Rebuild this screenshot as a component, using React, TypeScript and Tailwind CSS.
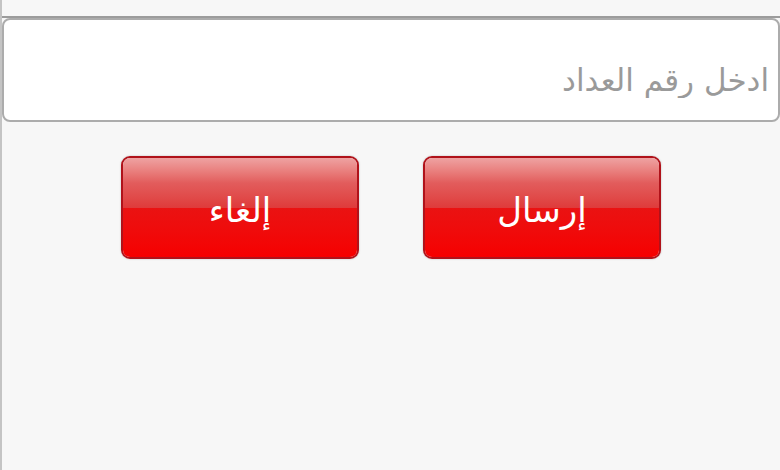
import { useState } from "react";

const AR_FONT = { fontFamily: '"DejaVu Sans", "Noto Sans", sans-serif' };

function RedButton({ label, onClick }: { label: string; onClick?: () => void }) {
  return (
    <button
      onClick={onClick}
      className="relative w-[238px] h-[103px] rounded-[9px] border-[2px] border-[#b0121a] overflow-hidden shadow-[0_0_2px_rgba(0,0,0,0.25)]"
    >
      {/* glossy top half / solid bottom half */}
      <div className="absolute inset-0 flex flex-col">
        <div className="h-1/2 bg-gradient-to-b from-[#eea2a2] via-[#e25c5c] to-[#df3a3a]" />
        <div className="h-1/2 bg-gradient-to-b from-[#ea1212] to-[#f60000]" />
      </div>
      <span className="relative text-white text-[34px] leading-none pt-[4px] block" style={AR_FONT}>
        {label}
      </span>
    </button>
  );
}

export default function App() {
  const [meter, setMeter] = useState("");

  return (
    <div className="w-[780px] h-[470px] bg-[#f7f7f7] border-l-2 border-[#c4c4c4] overflow-hidden" dir="rtl">
      <div className="h-[18px] border-b-2 border-[#9c9c9c]" />

      <div className="h-[104px] bg-white rounded-[8px] border-2 border-[#acacac] flex items-end">
        <input
          value={meter}
          onChange={e => setMeter(e.target.value)}
          placeholder="ادخل رقم العداد"
          className="w-full bg-transparent outline-none text-[31px] text-[#444] placeholder:text-[#9a9a9a] pr-[9px] pb-[17px]"
          style={AR_FONT}
        />
      </div>

      <div className="flex justify-center gap-[64px] mt-[34px]">
        <RedButton label="إرسال" />
        <RedButton label="إلغاء" onClick={() => setMeter("")} />
      </div>
    </div>
  );
}
